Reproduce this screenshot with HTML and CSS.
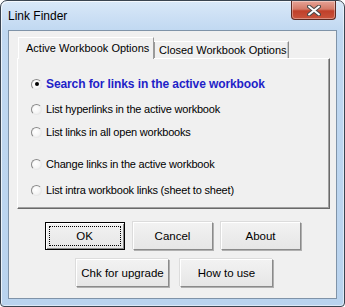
FILE: index.html
```html
<!DOCTYPE html>
<html lang="en">

<head>
    <meta charset="UTF-8">
    <title>Link Finder</title>
    <link rel="stylesheet" href="styles.css">
</head>

<body>
    <div class="window">
        <div class="titlebar">
            <span class="title">Link Finder</span>
            <div class="close-btn">
                <svg width="14" height="11" viewBox="0 0 14 11">
                    <path d="M2 1.5 L12 9.5 M12 1.5 L2 9.5" stroke="#4a4a4a" stroke-width="4" stroke-linecap="round"/>
                    <path d="M2 1.5 L12 9.5 M12 1.5 L2 9.5" stroke="#ffffff" stroke-width="2" stroke-linecap="round"/>
                </svg>
            </div>
        </div>

        <div class="client">
            <!-- tab strip -->
            <div class="tabs">
                <div class="tab active">Active Workbook Options</div>
                <div class="tab">Closed Workbook Options</div>
            </div>

            <div class="panel">
                <label class="option first">
                    <span class="radio checked"></span>
                    <span class="opt-text bold">Search for links in the active workbook</span>
                </label>
                <label class="option second">
                    <span class="radio"></span>
                    <span class="opt-text">List hyperlinks in the active workbook</span>
                </label>
                <label class="option third">
                    <span class="radio"></span>
                    <span class="opt-text">List links in all open workbooks</span>
                </label>
                <label class="option fourth">
                    <span class="radio"></span>
                    <span class="opt-text">Change links in the active workbook</span>
                </label>
                <label class="option fifth">
                    <span class="radio"></span>
                    <span class="opt-text">List intra workbook links (sheet to sheet)</span>
                </label>
            </div>

            <div class="btn-row row-one">
                <button class="btn default"><span class="focus">OK</span></button>
                <button class="btn">Cancel</button>
                <button class="btn">About</button>
            </div>
            <div class="btn-row row-two">
                <button class="btn wide">Chk for upgrade</button>
                <button class="btn wide">How to use</button>
            </div>
        </div>
    </div>
</body>

</html>
```

FILE: styles.css
```css
body {
    margin: 0;
    padding: 0;
    font-family: "Liberation Sans", Arial, sans-serif;
    font-size: 11px;
    color: #000;
    background: #fff;
}

.window {
    width: 345px;
    height: 307px;
    box-sizing: border-box;
    border: 1px solid #3a4450;
    border-radius: 7px 7px 4px 4px;
    background: linear-gradient(to bottom, #d9e8f8 0px, #c0d8f1 30px, #b9d3ee 100%);
    display: flex;
    flex-direction: column;
    box-shadow: inset 1px 1px 0 rgba(255, 255, 255, 0.7), inset -1px -1px 0 rgba(255, 255, 255, 0.5);
}

.titlebar {
    height: 28px;
    display: flex;
    align-items: flex-start;
    position: relative;
}

.title {
    font-size: 12px;
    margin: 8px 0 0 7px;
    color: #000;
}

.close-btn {
    position: absolute;
    top: 0;
    right: 8px;
    width: 45px;
    height: 19px;
    box-sizing: border-box;
    border: 1px solid #5d2a22;
    border-top: none;
    border-radius: 0 0 4px 4px;
    background: linear-gradient(to bottom, #e6a396 0%, #d47a68 45%, #c0402a 55%, #c9543c 100%);
    box-shadow: inset 0 0 0 1px rgba(255, 255, 255, 0.35);
    display: flex;
    align-items: center;
    justify-content: center;
}

.client {
    flex: 1;
    margin: 1px 7px 7px 7px;
    border: 1px solid #7f93a8;
    background: #f0f0f0;
    padding: 6px 8px 0 8px;
}

.tabs {
    display: flex;
    align-items: flex-end;
    height: 21px;
    padding-left: 1px;
}

.tab {
    box-sizing: border-box;
    height: 17px;
    white-space: nowrap;
    border: 1px solid #8a8a8a;
    border-bottom: none;
    border-left-color: #fff;
    border-top-color: #fff;
    font-size: 11px;
    background: #f0f0f0;
}

.tab.active {
    height: 22px;
    margin-bottom: -1px;
    width: 136px;
    padding: 3px 0 0 7px;
    line-height: 14px;
    position: relative;
    z-index: 1;
    border-right-color: #9a9a9a;
}

.tab:not(.active) {
    width: 135px;
    padding: 1px 0 0 5px;
    line-height: 15px;
    border-left: none;
    box-shadow: inset -1px 0 0 #c8c8c8, inset 1px 0 0 #9a9a9a;
}

.panel {
    width: 313px;
    height: 151px;
    box-sizing: border-box;
    border: 1px solid #fff;
    border-right-color: #696969;
    border-bottom-color: #696969;
    box-shadow: inset -1px -1px 0 #a0a0a0;
    display: flex;
    flex-direction: column;
    padding-left: 13px;
}

.option {
    display: flex;
    align-items: center;
    height: 14px;
    font-size: 11px;
    letter-spacing: -0.2px;
}

.option.first { margin-top: 18px; }
.option.second { margin-top: 11px; }
.option.third { margin-top: 9px; }
.option.fourth { margin-top: 18px; }
.option.fifth { margin-top: 12px; }

.radio {
    width: 11px;
    height: 11px;
    border-radius: 50%;
    box-sizing: border-box;
    border: 1px solid #8a8a8a;
    border-right-color: #e8e8e8;
    border-bottom-color: #e8e8e8;
    background: radial-gradient(circle at 40% 40%, #ffffff 0%, #f4f4f4 60%, #dcdcdc 100%);
    margin-right: 4px;
    position: relative;
}

.radio.checked::after {
    content: "";
    position: absolute;
    left: 2.5px;
    top: 2.5px;
    width: 4px;
    height: 4px;
    border-radius: 50%;
    background: #000;
}

.opt-text.bold {
    font-weight: bold;
    color: #1f1fc8;
    font-size: 12px;
    letter-spacing: -0.1px;
}

.btn-row {
    display: flex;
    justify-content: center;
}

.row-one {
    margin-top: 13px;
    gap: 8px;
}

.row-two {
    margin-top: 9px;
    gap: 11px;
    padding-left: 4px;
}

.btn {
    width: 80px;
    height: 28px;
    box-sizing: border-box;
    font-family: "Liberation Sans", Arial, sans-serif;
    font-size: 11.5px;
    color: #000;
    background: linear-gradient(to bottom, #f2f2f2, #e6e6e6);
    border: 1px solid #fff;
    border-right-color: #8a8a8a;
    border-bottom-color: #8a8a8a;
    box-shadow: 1px 1px 0 #b0b0b0, -1px -1px 0 #dcdcdc;
    padding: 0;
}

.btn.wide {
    width: 93px;
}

.btn.default {
    border: 1px solid #000;
    box-shadow: inset 1px 1px 0 #fff, inset -1px -1px 0 #8a8a8a;
    padding: 3px;
}

.btn .focus {
    display: flex;
    align-items: center;
    justify-content: center;
    height: 100%;
    border: 1px dotted #000;
    box-sizing: border-box;
}
```
